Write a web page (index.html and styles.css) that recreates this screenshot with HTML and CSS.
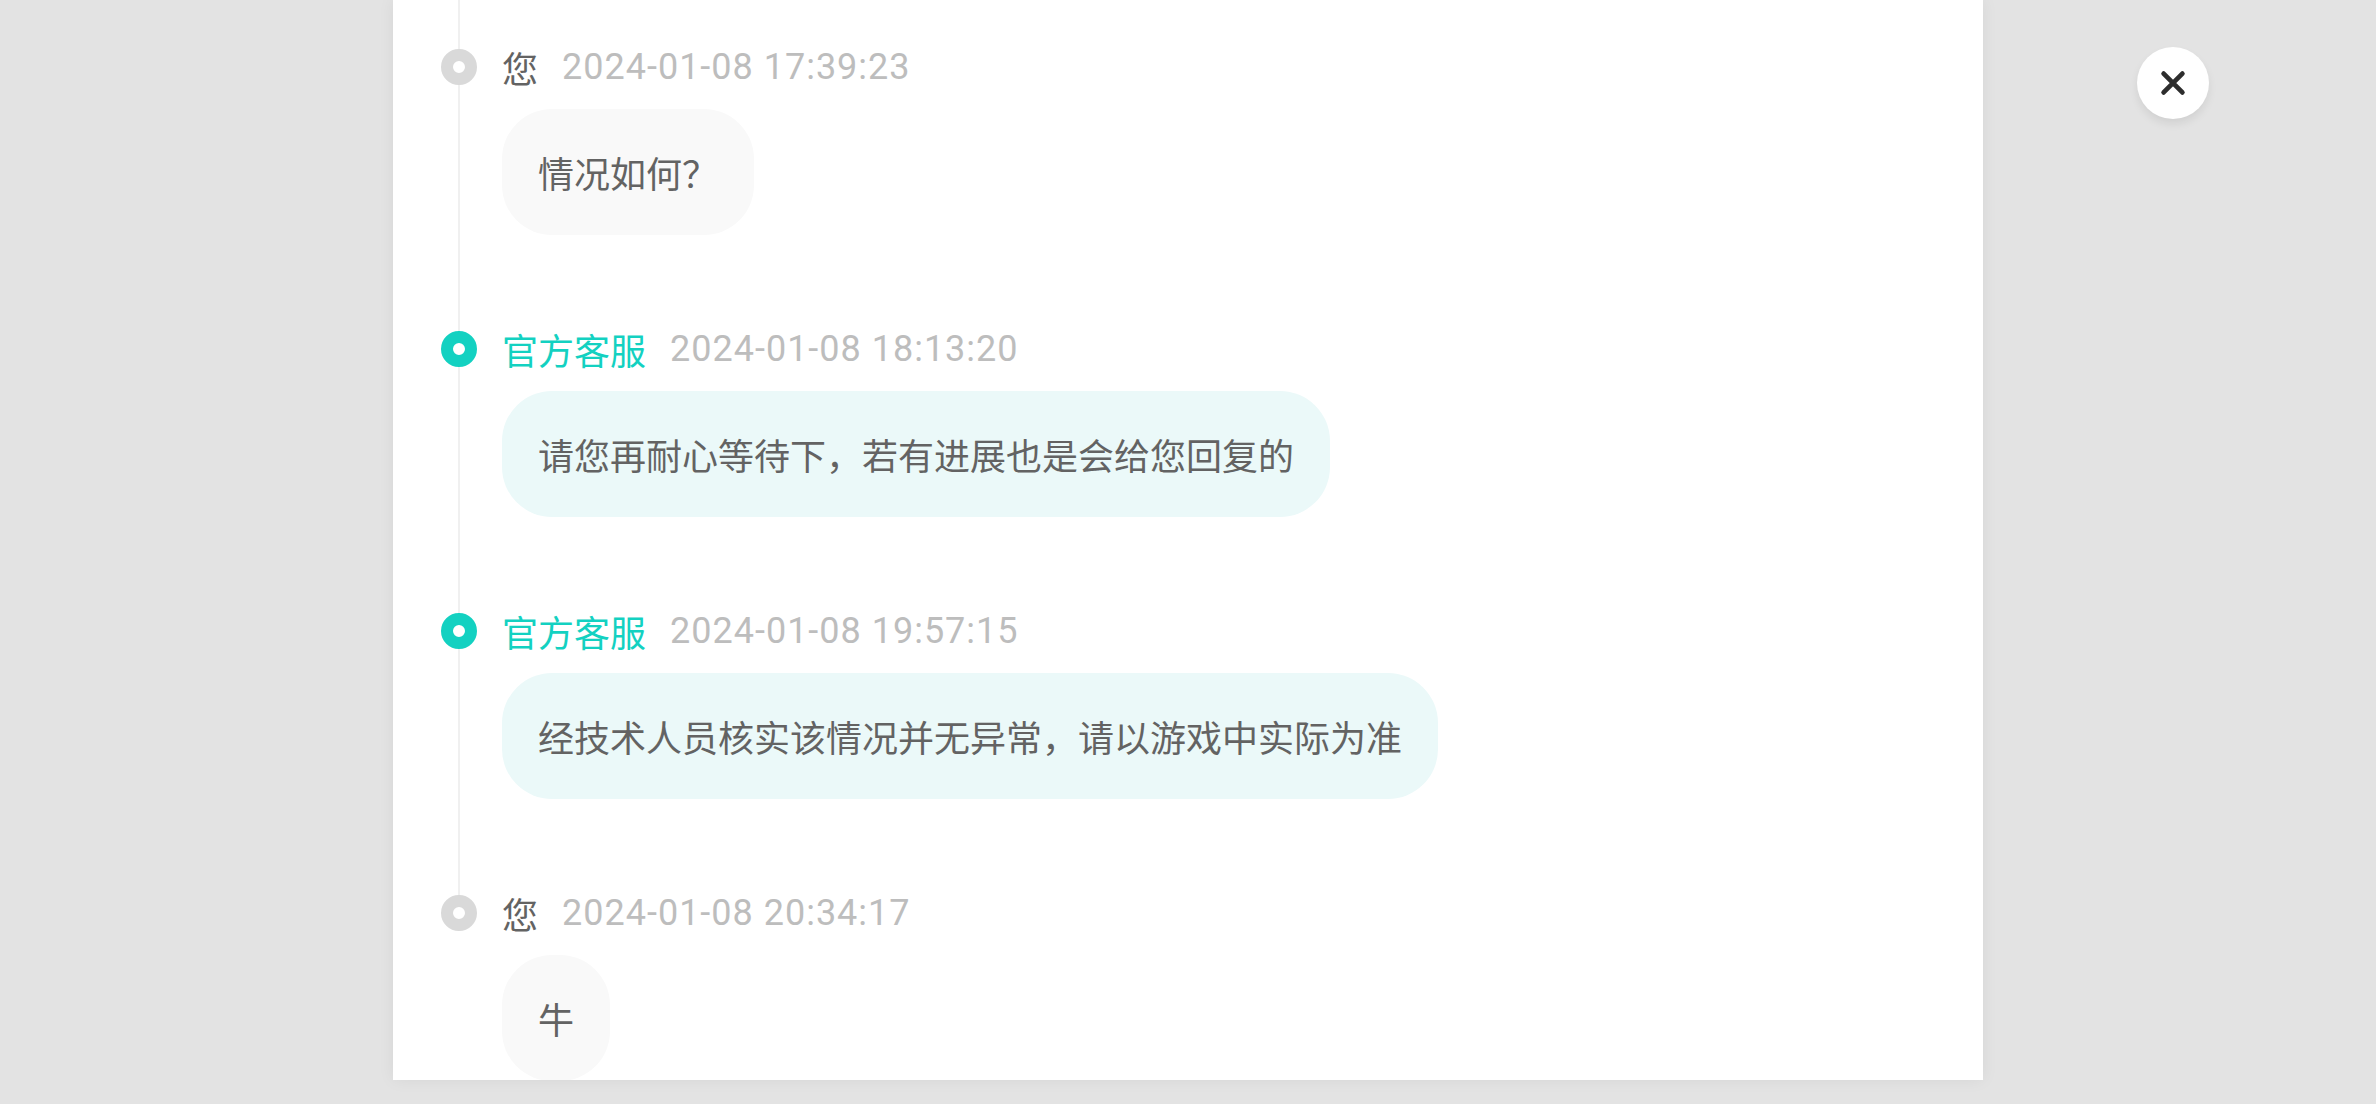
FILE: index.html
```html
<!DOCTYPE html>
<html lang="zh-CN">
<head>
<meta charset="utf-8">
<title>工单记录</title>
<link rel="stylesheet" href="styles.css">
</head>
<body>
<div class="stage">
  <section class="panel">
    <ol class="timeline">
      <li class="msg msg--user">
        <div class="msg__head"><span class="dot"></span><span class="msg__name">您</span><time class="msg__time">2024-01-08 17:39:23</time></div>
        <div class="msg__bubble">情况如何？</div>
      </li>
      <li class="msg msg--staff">
        <div class="msg__head"><span class="dot"></span><span class="msg__name">官方客服</span><time class="msg__time">2024-01-08 18:13:20</time></div>
        <div class="msg__bubble">请您再耐心等待下，若有进展也是会给您回复的</div>
      </li>
      <li class="msg msg--staff">
        <div class="msg__head"><span class="dot"></span><span class="msg__name">官方客服</span><time class="msg__time">2024-01-08 19:57:15</time></div>
        <div class="msg__bubble">经技术人员核实该情况并无异常，请以游戏中实际为准</div>
      </li>
      <li class="msg msg--user">
        <div class="msg__head"><span class="dot"></span><span class="msg__name">您</span><time class="msg__time">2024-01-08 20:34:17</time></div>
        <div class="msg__bubble">牛</div>
      </li>
    </ol>
  </section>
  <button class="close" type="button" aria-label="关闭">
    <svg viewBox="0 0 24 24" width="30" height="30" aria-hidden="true"><path d="M4.5 4.5L19.5 19.5M19.5 4.5L4.5 19.5" fill="none" stroke="#2d2d2d" stroke-width="3.8" stroke-linecap="round"/></svg>
  </button>
</div>
</body>
</html>
```

FILE: styles.css
```css
html, body {
  margin: 0;
  padding: 0;
}

body {
  background: #e3e3e3;
  font-family: "Noto Sans CJK SC", "Noto Sans", sans-serif;
  height: 1104px;
  overflow: hidden;
}

.stage {
  position: relative;
  height: 1104px;
}

.panel {
  width: 1590px;
  height: 1080px;
  margin: 0 auto;
  background: #ffffff;
  box-shadow: 0 0 16px rgba(0, 0, 0, 0.06);
  overflow: hidden;
  box-sizing: border-box;
  padding-left: 48px;
}

.timeline {
  list-style: none;
  margin: 0;
  padding: 0;
}

.msg {
  padding-top: 89px;
  background: linear-gradient(#f0f0f0, #f0f0f0) no-repeat 17px 0 / 2px 100%;
}

.msg:first-child {
  padding-top: 42px;
}

.msg:last-child {
  background-size: 2px 114px;
}

.msg__head {
  display: flex;
  align-items: center;
  height: 50px;
}

.dot {
  flex: none;
  width: 12px;
  height: 12px;
  border-radius: 50%;
  border: 12px solid #d9d9d9;
  background: #ffffff;
  margin-right: 25px;
}

.msg--staff .dot {
  border-color: #13d1c1;
}

.msg__name {
  font-size: 36px;
  line-height: 50px;
  color: #636363;
  margin-right: 24px;
}

.msg--staff .msg__name {
  color: #13d1c1;
}

.msg__time {
  font-family: "Roboto", "Noto Sans", sans-serif;
  font-size: 36px;
  letter-spacing: 1px;
  line-height: 50px;
  color: #bdbdbd;
}

.msg__bubble {
  width: fit-content;
  margin: 17px 0 0 61px;
  padding: 38px 36px;
  font-size: 36px;
  line-height: 50px;
  color: #636363;
  background: #f9f9f9;
  border-radius: 50px;
}

.msg--staff .msg__bubble {
  background: #ebf9f9;
}

.close {
  position: absolute;
  top: 47px;
  left: 2137px;
  width: 72px;
  height: 72px;
  border: none;
  border-radius: 50%;
  background: #ffffff;
  box-shadow: 0 5px 8px rgba(0, 0, 0, 0.08);
  display: flex;
  align-items: center;
  justify-content: center;
  padding: 0;
}
```
